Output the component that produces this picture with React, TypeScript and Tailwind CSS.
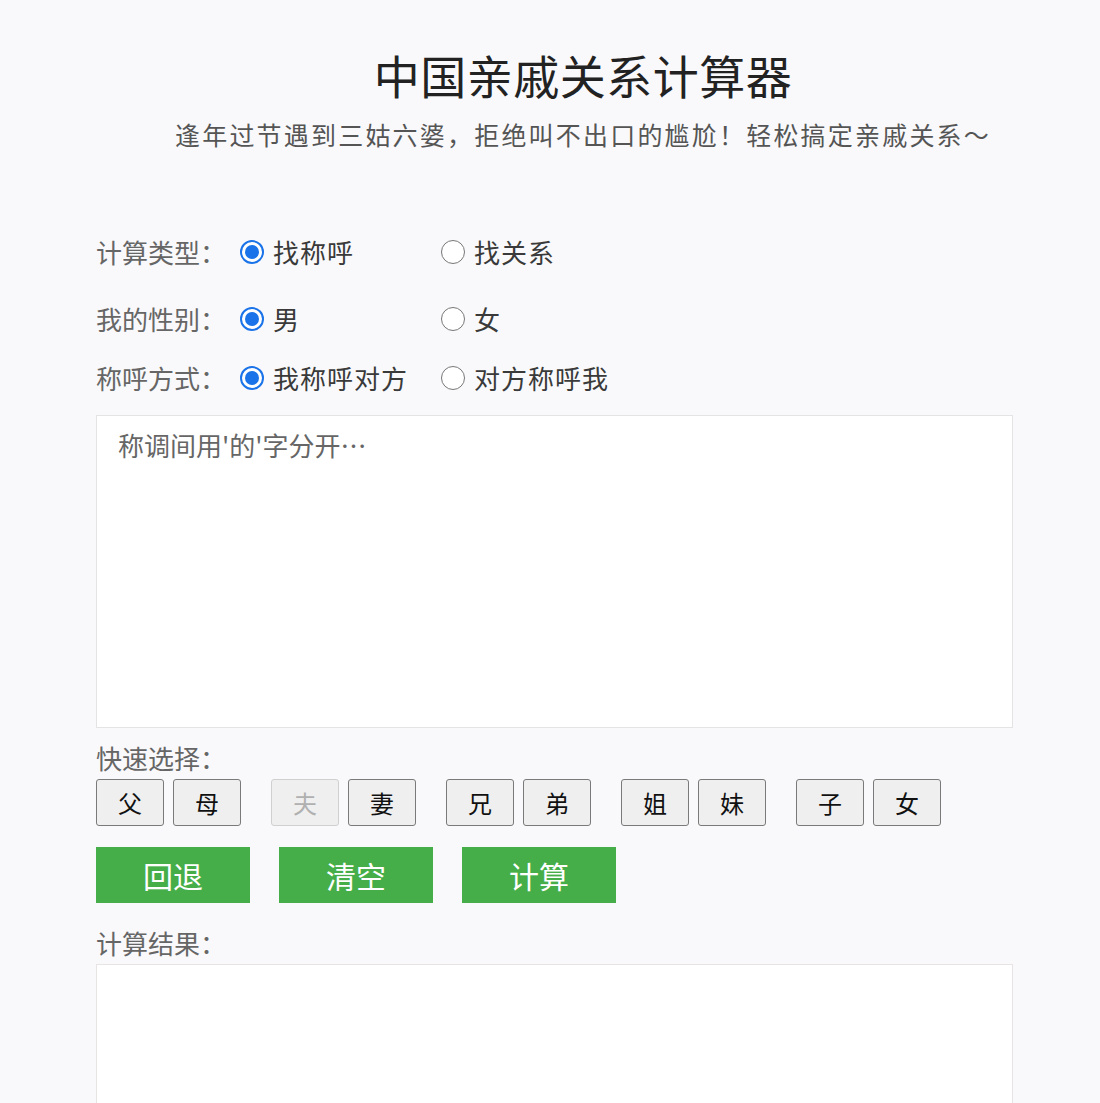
import React from "react";

const FONT = { fontFamily: '"Noto Sans CJK SC", "Noto Sans", sans-serif' };

function Radio({ checked, label }: { checked: boolean; label: string }) {
  return (
    <div className="flex items-center">
      {checked ? (
        <span className="w-[24px] h-[24px] rounded-full border-[2px] border-[#1a73e8] bg-white flex items-center justify-center">
          <span className="w-[14px] h-[14px] rounded-full bg-[#1a73e8]" />
        </span>
      ) : (
        <span className="w-[24px] h-[24px] rounded-full border-[1.5px] border-[#777] bg-white" />
      )}
      <span className="ml-[9px] text-[26px] tracking-[1px] text-[#3a3a3a] leading-[40px]">{label}</span>
    </div>
  );
}

function Row({ label, a, b, aChecked }: { label: string; a: string; b: string; aChecked: boolean }) {
  return (
    <div className="flex items-center h-[40px]">
      <div className="w-[144px] text-[26px] text-[#666] leading-[40px]">{label}</div>
      <div className="w-[201px]">
        <Radio checked={aChecked} label={a} />
      </div>
      <Radio checked={!aChecked} label={b} />
    </div>
  );
}

function Key({ ch, disabled }: { ch: string; disabled?: boolean }) {
  return (
    <button
      className={
        disabled
          ? "w-[68px] h-[47px] rounded-[3px] border border-[#d0d0d0] bg-[#efefef] text-[24px] text-[#b0b0b0] flex items-center justify-center"
          : "w-[68px] h-[47px] rounded-[3px] border-[1.5px] border-[#7a7a7a] bg-[#efefef] text-[24px] text-[#111] flex items-center justify-center"
      }
      style={FONT}
    >
      {ch}
    </button>
  );
}

const groups: { ch: string; disabled?: boolean }[][] = [
  [{ ch: "父" }, { ch: "母" }],
  [{ ch: "夫", disabled: true }, { ch: "妻" }],
  [{ ch: "兄" }, { ch: "弟" }],
  [{ ch: "姐" }, { ch: "妹" }],
  [{ ch: "子" }, { ch: "女" }],
];

export default function App() {
  return (
    <div className="min-h-[1103px] bg-[#f9f9fb] overflow-hidden" style={FONT}>
      <header className="pl-[66px] text-center">
        <h1 className="mt-[46px] text-[46px] leading-[56px] text-[#222] tracking-[0.5px]">中国亲戚关系计算器</h1>
        <p className="mt-[14px] text-[25px] leading-[36px] text-[#555] tracking-[2.2px]">
          逢年过节遇到三姑六婆，拒绝叫不出口的尴尬！轻松搞定亲戚关系～
        </p>
      </header>

      <main className="ml-[96px] w-[917px]">
        <div className="mt-[80px]">
          <Row label="计算类型：" a="找称呼" b="找关系" aChecked />
        </div>
        <div className="mt-[27px]">
          <Row label="我的性别：" a="男" b="女" aChecked />
        </div>
        <div className="mt-[19px]">
          <Row label="称呼方式：" a="我称呼对方" b="对方称呼我" aChecked />
        </div>

        <div className="mt-[17px] h-[313px] bg-white border border-[#e4e4e4] pl-[21px] pt-[14px]">
          <span className="text-[26px] leading-[30px] text-[#666]">称调间用'的'字分开…</span>
        </div>

        <div className="mt-[15px] text-[26px] leading-[30px] text-[#666]">快速选择：</div>
        <div className="mt-[6px] flex gap-[30px]">
          {groups.map((g, i) => (
            <div key={i} className="flex gap-[9px]">
              {g.map((k) => (
                <Key key={k.ch} ch={k.ch} disabled={k.disabled} />
              ))}
            </div>
          ))}
        </div>

        <div className="mt-[21px] flex gap-[29px]">
          {["回退", "清空", "计算"].map((t) => (
            <button
              key={t}
              className="w-[154px] h-[56px] bg-[#46ae48] text-white text-[30px] flex items-center justify-center"
              style={FONT}
            >
              {t}
            </button>
          ))}
        </div>

        <div className="mt-[25px] text-[26px] leading-[30px] text-[#666]">计算结果：</div>
        <div className="mt-[6px] h-[200px] bg-white border border-[#e8e4e4]" />
      </main>
    </div>
  );
}
